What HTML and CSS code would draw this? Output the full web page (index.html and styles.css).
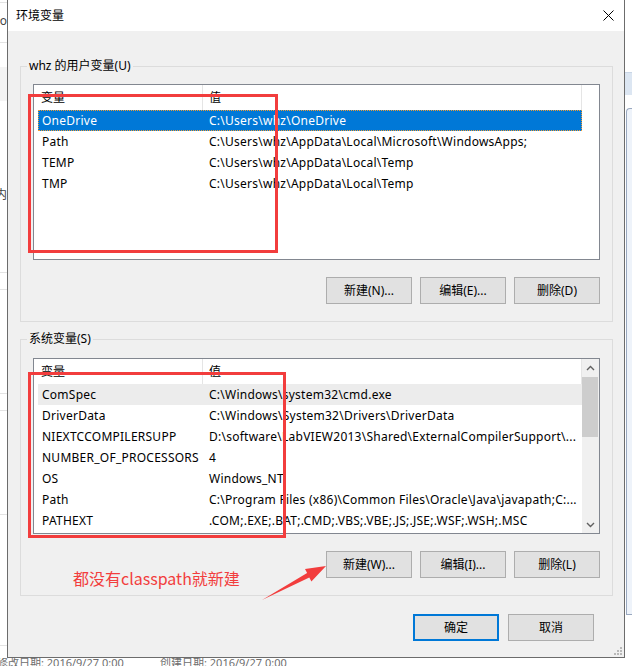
FILE: index.html
```html
<!DOCTYPE html>
<html lang="zh-CN">
<head>
<meta charset="utf-8">
<title>环境变量</title>
<link rel="stylesheet" href="styles.css">
</head>
<body>
<div class="desktop">
  <div class="bg-left">
    <div class="seg s1"></div>
    <div class="seg s2"><span>o</span></div>
    <div class="seg s3"></div>
    <div class="seg s4"></div>
    <div class="seg s5"><span>内</span></div>
    <div class="seg s6"></div>
    <div class="seg s7"></div>
    <div class="seg s8"></div>
    <div class="seg s9"></div>
    <div class="seg s10"></div>
  </div>

  <div class="dialog">
    <div class="titlebar">
      <span class="title">环境变量</span>
      <svg class="close" width="11" height="11" viewBox="0 0 11 11"><path d="M0.5 0.5 L10.5 10.5 M10.5 0.5 L0.5 10.5" stroke="#000" stroke-width="1" fill="none"/></svg>
    </div>
    <div class="body">
      <div class="group">
        <div class="legend">whz 的用户变量(U)</div>
        <div class="list">
          <div class="list-main">
            <div class="lv-header"><div class="h1">变量</div><div class="h2">值</div></div>
            <div class="rows">
              <div class="row sel"><div class="c1">OneDrive</div><div class="c2">C:\Users\whz\OneDrive</div></div>
              <div class="row"><div class="c1">Path</div><div class="c2">C:\Users\whz\AppData\Local\Microsoft\WindowsApps;</div></div>
              <div class="row"><div class="c1">TEMP</div><div class="c2">C:\Users\whz\AppData\Local\Temp</div></div>
              <div class="row"><div class="c1">TMP</div><div class="c2">C:\Users\whz\AppData\Local\Temp</div></div>
            </div>
          </div>
          <div class="sb-space"></div>
        </div>
        <div class="btns">
          <div class="btn">新建(N)...</div>
          <div class="btn">编辑(E)...</div>
          <div class="btn">删除(D)</div>
        </div>
      </div>

      <div class="group group-sys">
        <div class="legend">系统变量(S)</div>
        <div class="list">
          <div class="list-main">
            <div class="lv-header"><div class="h1">变量</div><div class="h2">值</div></div>
            <div class="rows">
              <div class="row hover"><div class="c1">ComSpec</div><div class="c2">C:\Windows\system32\cmd.exe</div></div>
              <div class="row"><div class="c1">DriverData</div><div class="c2">C:\Windows\System32\Drivers\DriverData</div></div>
              <div class="row"><div class="c1">NIEXTCCOMPILERSUPP</div><div class="c2">D:\software\LabVIEW2013\Shared\ExternalCompilerSupport\...</div></div>
              <div class="row"><div class="c1">NUMBER_OF_PROCESSORS</div><div class="c2">4</div></div>
              <div class="row"><div class="c1">OS</div><div class="c2">Windows_NT</div></div>
              <div class="row"><div class="c1">Path</div><div class="c2">C:\Program Files (x86)\Common Files\Oracle\Java\javapath;C:...</div></div>
              <div class="row"><div class="c1">PATHEXT</div><div class="c2">.COM;.EXE;.BAT;.CMD;.VBS;.VBE;.JS;.JSE;.WSF;.WSH;.MSC</div></div>
            </div>
          </div>
          <div class="scrollbar">
            <div class="sb-btn"><svg width="9" height="6" viewBox="0 0 9 6"><path d="M1 5 L4.5 1.5 L8 5" stroke="#606060" stroke-width="1.4" fill="none"/></svg></div>
            <div class="sb-track"><div class="sb-thumb"></div></div>
            <div class="sb-btn"><svg width="9" height="6" viewBox="0 0 9 6"><path d="M1 1 L4.5 4.5 L8 1" stroke="#606060" stroke-width="1.4" fill="none"/></svg></div>
          </div>
        </div>
        <div class="btns">
          <div class="btn">新建(W)...</div>
          <div class="btn">编辑(I)...</div>
          <div class="btn">删除(L)</div>
        </div>
      </div>

      <div class="footer">
        <div class="btn btn-default">确定</div>
        <div class="btn">取消</div>
      </div>
    </div>

    <div class="mark mark-user"></div>
    <div class="mark mark-sys"></div>
    <div class="note">都没有classpath就新建</div>
    <svg class="arrow" width="80" height="45" viewBox="0 0 80 45"><polygon points="7,40 54.3,17.4 56.4,21.4 71,6 50,9 52.1,13" fill="#f23d3d"/></svg>
    <svg class="grip" width="9" height="9" viewBox="0 0 9 9"><g fill="#b8b8b8"><rect x="7" y="1" width="2" height="2"/><rect x="7" y="4" width="2" height="2"/><rect x="4" y="4" width="2" height="2"/><rect x="7" y="7" width="2" height="2"/><rect x="4" y="7" width="2" height="2"/><rect x="1" y="7" width="2" height="2"/></g></svg>
  </div>

  <div class="bg-right">
    <div class="r1"></div>
    <div class="r2"></div>
    <div class="r3"></div>
    <div class="r4"></div>
  </div>

  <div class="bg-bottom">
    <span class="meta1">修改日期: 2016/9/27 0:00</span>
    <span class="meta2">创建日期: 2016/9/27 0:00</span>
  </div>
</div>
</body>
</html>
```

FILE: styles.css
```css
* { box-sizing: border-box; margin: 0; padding: 0; }

html, body {
  width: 632px;
  height: 666px;
  overflow: hidden;
  background: #fff;
  font-family: "Noto Sans", "Noto Sans CJK SC", sans-serif;
  font-size: 12px;
  color: #000;
}

.desktop {
  width: 632px;
  height: 666px;
  display: grid;
  grid-template-columns: 7px 618px 7px;
  grid-template-rows: 658px 8px;
}

/* ---------- background window (left) ---------- */
.bg-left {
  grid-column: 1;
  grid-row: 1;
  display: flex;
  flex-direction: column;
  overflow: hidden;
  background: #fff;
}
.seg {
  flex: none;
  border-bottom: 1px solid #e3e3e3;
  display: flex;
  justify-content: flex-end;
  align-items: flex-start;
  color: #444;
  line-height: 16px;
  white-space: nowrap;
  overflow: hidden;
}
.s1 { height: 3px; }
.s2 { height: 40px; padding-top: 10px; }
.s3 { height: 24px; border-bottom: none; }
.s4 { height: 34px; border-bottom: none; background: #f4f4f4; }
.s5 { height: 172px; padding-top: 86px; }
.s6 { height: 17px; }
.s7 { height: 104px; }
.s8 { height: 17px; }
.s9 { height: 104px; }
.s10 { height: 131px; }

/* ---------- background window (right) ---------- */
.bg-right {
  grid-column: 3;
  grid-row: 1;
  display: flex;
  flex-direction: column;
  background: #fff;
  overflow: hidden;
}
.r1 { height: 72px; flex: none; }
.r2 { height: 23px; flex: none; background: #dce6f2; border-top: 1px solid #c9d6e6; }
.r3 { height: 13px; flex: none; }
.r4 {
  height: 507px;
  flex: none;
  margin-left: 1px;
  background: #eef3fa;
  border-left: 1px solid #9aa9c0;
  border-top: 1px solid #9aa9c0;
  border-bottom: 1px solid #9aa9c0;
  border-top-left-radius: 4px;
}

/* ---------- background (bottom) ---------- */
.bg-bottom {
  grid-column: 1 / -1;
  grid-row: 2;
  display: flex;
  overflow: hidden;
  color: #6e6e6e;
  font-size: 11px;
  line-height: 16px;
  white-space: nowrap;
}
.meta1 { width: 163px; flex: none; margin-top: -3px; margin-left: -3px; }
.meta2 { flex: none; margin-top: -3px; }

/* ---------- dialog ---------- */
.dialog {
  grid-column: 2;
  grid-row: 1;
  position: relative;
  display: flex;
  flex-direction: column;
  background: #f0f0f0;
  border-left: 1px solid #6c6c6c;
  border-right: 1px solid #6c6c6c;
  border-bottom: 1px solid #6c6c6c;
}

.titlebar {
  height: 31px;
  flex: none;
  background: #fff;
  display: flex;
  align-items: center;
  justify-content: space-between;
  padding: 0 10px 0 8px;
}
.title { font-size: 12px; line-height: 16px; }
.close { display: block; }

.body {
  flex: 1;
  display: flex;
  flex-direction: column;
  padding: 35px 11px 0 12px;
}

.group {
  display: flex;
  flex-direction: column;
  border: 1px solid #dcdcdc;
  padding: 0 12px 17px 12px;
}
.group-sys { margin-top: 17px; }

.legend {
  align-self: flex-start;
  margin: -9px 0 10px -6px;
  padding: 0 2px;
  background: #f0f0f0;
  line-height: 16px;
  white-space: nowrap;
}
.group-sys .legend { margin-bottom: 11px; }

/* ---------- list view ---------- */
.list {
  height: 176px;
  flex: none;
  border: 1px solid #828790;
  background: #fff;
  display: flex;
  overflow: hidden;
}
.list-main {
  width: 548px;
  flex: none;
  display: flex;
  flex-direction: column;
  overflow: hidden;
}
.sb-space { width: 17px; flex: none; }

.lv-header {
  height: 25px;
  flex: none;
  display: flex;
  line-height: 25px;
}
.h1 {
  width: 169px;
  flex: none;
  padding-left: 7px;
  border-right: 1px solid #e5e5e5;
}
.h2 {
  width: 379px;
  flex: none;
  padding-left: 6px;
  border-right: 1px solid #e5e5e5;
}

.rows {
  display: flex;
  flex-direction: column;
  padding-left: 4px;
}
.row {
  height: 21px;
  flex: none;
  display: flex;
  align-items: center;
  line-height: 16px;
  letter-spacing: 0.25px;
  white-space: nowrap;
}
.c1 { width: 167px; flex: none; padding-left: 4px; overflow: hidden; }
.c2 { flex: 1; padding-left: 4px; overflow: hidden; }

.row.sel {
  background: #0078d7;
  color: #fff;
  outline: 1px dotted #f39c32;
  outline-offset: -1px;
}
.row.hover { background: #ececec; }

.scrollbar {
  width: 17px;
  flex: none;
  background: #f0f0f0;
  display: flex;
  flex-direction: column;
}
.sb-btn {
  height: 17px;
  flex: none;
  display: flex;
  align-items: center;
  justify-content: center;
}
.sb-track { flex: 1; padding-top: 1px; }
.sb-thumb {
  height: 60px;
  margin: 0 1px 0 0;
  background: #cdcdcd;
}

/* ---------- buttons ---------- */
.btns {
  display: flex;
  justify-content: flex-end;
  gap: 8px;
  margin-top: 17px;
}
.btn {
  width: 86px;
  height: 27px;
  flex: none;
  display: flex;
  align-items: center;
  justify-content: center;
  background: #e1e1e1;
  border: 1px solid #adadad;
  line-height: 16px;
  white-space: nowrap;
}
.btn-default { border: 2px solid #0078d7; }

.footer {
  display: flex;
  justify-content: flex-end;
  gap: 9px;
  margin-top: 18px;
  margin-right: 19px;
}

/* ---------- annotations (overlay) ---------- */
.mark {
  position: absolute;
  border: 3px solid #f23d3d;
}
.mark-user { left: 20px; top: 94px; width: 250px; height: 159px; }
.mark-sys { left: 20px; top: 372px; width: 258px; height: 166px; }

.note {
  position: absolute;
  left: 65px;
  top: 567px;
  font-family: "Noto Sans CJK SC", sans-serif;
  font-size: 16px;
  line-height: 22px;
  color: #f23d3d;
  white-space: nowrap;
}
.arrow { position: absolute; left: 247px; top: 560px; }
.grip { position: absolute; right: 2px; bottom: 2px; }
```
